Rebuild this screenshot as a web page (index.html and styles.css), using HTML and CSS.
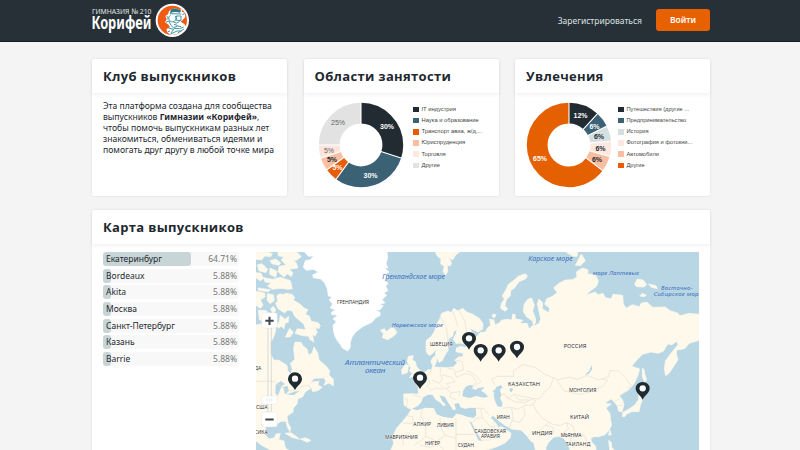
FILE: index.html
```html
<!DOCTYPE html>
<html lang="ru">
<head>
<meta charset="utf-8">
<title>Клуб выпускников</title>
<link rel="stylesheet" href="styles.css">
</head>
<body>
<header class="topbar">
  <div class="container topbar-inner">
    <a class="logo">
      <svg class="wordmark" width="61" height="34" viewBox="0 0 61 34">
        <text x="0" y="10.5" class="logo-small" textLength="59.5" lengthAdjust="spacingAndGlyphs">ГИМНАЗИЯ № 210</text>
        <text x="-.5" y="26.3" class="logo-big" textLength="60" lengthAdjust="spacingAndGlyphs">Корифей</text>
      </svg>
      <svg class="emblem" width="35" height="35" viewBox="0 0 105 105">
        <circle cx="52" cy="52" r="50" fill="#fff"/>
        <circle cx="52" cy="52" r="44" fill="#f15a12"/>
        <path d="M47 20Q60 13 73 21L82 18 81 26 90 29 91 42 83 51 77 56 88 63 94 73 82 87 66 94 49 96 38 89 34 79 45 72 39 64 30 58 35 48 31 39 39 34 42 25Z" fill="#fff"/>
        <path d="M47 20Q60 13 73 21L79 22 75 29Q59 24 45 31Z" fill="#307a83"/>
        <path d="M44 32L79 33M91 31L82 35M47 36a11 11 0 1 0 14 3M64 39h14v13h-14zM61 42h4M56 57Q64 65 74 55M35 39L40 45 36 50M33 57L42 54 47 66 55 74 68 69 78 71M40 75L56 79 48 90M57 76L74 77 86 72M47 93L66 84 80 84M68 90L87 78M57 64L67 67M39 86L45 84" fill="none" stroke="#4695a0" stroke-width="3"/>
      </svg>
    </a>
    <nav class="nav"><a class="register">Зарегистрироваться</a><a class="login">Войти</a></nav>
  </div>
</header>
<main class="container page">
  <div class="cards">
    <section class="card">
      <h2 class="card-title">Клуб выпускников</h2>
      <p class="about">Эта платформа создана для сообщества<br>выпускников <b>Гимназии «Корифей»</b>,<br>чтобы помочь выпускникам разных лет<br>знакомиться, обмениваться идеями и<br>помогать друг другу в любой точке мира</p>
    </section>
    <section class="card">
      <h2 class="card-title">Области занятости</h2>
      <div class="chart">
        <svg width="86" height="86" viewBox="-43 -43 86 86">
          <g class="ring" transform="rotate(-90)">
            <circle r="31.8" pathLength="100" stroke="#222b31" stroke-dasharray="30 70"/>
            <circle r="31.8" pathLength="100" stroke="#3a6274" stroke-dasharray="30 70" stroke-dashoffset="-30"/>
            <circle r="31.8" pathLength="100" stroke="#e85c05" stroke-dasharray="5 95" stroke-dashoffset="-60"/>
            <circle r="31.8" pathLength="100" stroke="#f9bfa2" stroke-dasharray="5 95" stroke-dashoffset="-65"/>
            <circle r="31.8" pathLength="100" stroke="#fde5dc" stroke-dasharray="5 95" stroke-dashoffset="-70"/>
            <circle r="31.8" pathLength="100" stroke="#e2e2e2" stroke-dasharray="25 75" stroke-dashoffset="-75"/>
          </g>
          <g class="gaps"><path d="M0-20V-43"/><path d="M0-20V-43" transform="rotate(108)"/><path d="M0-20V-43" transform="rotate(216)"/><path d="M0-20V-43" transform="rotate(234)"/><path d="M0-20V-43" transform="rotate(252)"/><path d="M0-20V-43" transform="rotate(270)"/></g>
          <g class="slice"><text x="26" y="-15.8" class="on-dark">30%</text><text x="9.5" y="33" class="on-dark">30%</text><text x="-23.5" y="25.2" class="on-dark">5%</text><text x="-29" y="17">5%</text><text x="-32" y="7.6" class="muted">5%</text><text x="-23" y="-19.7" class="muted">25%</text></g>
        </svg>
        <ul class="legend">
          <li><i class="ink"></i>IT индустрия</li><li><i class="teal"></i>Наука и образование</li><li><i class="orange"></i>Транспорт авиа, ж/д,...</li><li><i class="peach"></i>Юриспруденция</li><li><i class="blush"></i>Торговля</li><li><i class="silver"></i>Другие</li>
        </ul>
      </div>
    </section>
    <section class="card">
      <h2 class="card-title">Увлечения</h2>
      <div class="chart hobbies">
        <svg width="86" height="86" viewBox="-43 -43 86 86">
          <g class="ring" transform="rotate(-90)">
            <circle r="31.8" pathLength="17" stroke="#222b31" stroke-dasharray="2 15"/>
            <circle r="31.8" pathLength="17" stroke="#3a6274" stroke-dasharray="1 16" stroke-dashoffset="-2"/>
            <circle r="31.8" pathLength="17" stroke="#d5dfe2" stroke-dasharray="1 16" stroke-dashoffset="-3"/>
            <circle r="31.8" pathLength="17" stroke="#fde8df" stroke-dasharray="1 16" stroke-dashoffset="-4"/>
            <circle r="31.8" pathLength="17" stroke="#f9bda1" stroke-dasharray="1 16" stroke-dashoffset="-5"/>
            <circle r="31.8" pathLength="17" stroke="#e56000" stroke-dasharray="11 6" stroke-dashoffset="-6"/>
          </g>
          <g class="gaps"><path d="M0-20V-43"/><path d="M0-20V-43" transform="rotate(42.35)"/><path d="M0-20V-43" transform="rotate(63.53)"/><path d="M0-20V-43" transform="rotate(84.7)"/><path d="M0-20V-43" transform="rotate(105.9)"/><path d="M0-20V-43" transform="rotate(127.1)"/></g>
          <g class="slice"><text x="11.5" y="-27" class="on-dark">12%</text><text x="25.5" y="-16.5" class="on-dark">6%</text><text x="30" y="-6">6%</text><text x="31.5" y="5.8">6%</text><text x="28" y="17.2">6%</text><text x="-29" y="16.3" class="on-dark">65%</text></g>
        </svg>
        <ul class="legend">
          <li><i class="ink"></i>Путешествия (другие ...</li><li><i class="teal"></i>Предпринимательство</li><li><i class="mist"></i>История</li><li><i class="blush"></i>Фотография и фотокни...</li><li><i class="peach"></i>Автомобили</li><li><i class="orange"></i>Другие</li>
        </ul>
      </div>
    </section>
  </div>
  <section class="card map-card">
    <h2 class="card-title">Карта выпускников</h2>
    <div class="map-body">
      <ul class="cities">
        <li class="leader"><span>Екатеринбург</span><em>64.71%</em></li><li><span>Bordeaux</span><em>5.88%</em></li><li><span>Akita</span><em>5.88%</em></li><li><span>Москва</span><em>5.88%</em></li><li><span>Санкт-Петербург</span><em>5.88%</em></li><li><span>Казань</span><em>5.88%</em></li><li><span>Barrie</span><em>5.88%</em></li>
      </ul>
      <svg class="map" width="443" height="198" viewBox="18 21 1329 594">
        <defs><g id="pin"><path d="M0 27C-5 15-21 8-21-7a21 19 0 0 1 42 0C21 8 5 15 0 27Z" fill="#1f2a31"/><circle cy="-7" r="9.5" fill="#fff"/></g></defs>
        <rect x="18" y="21" width="1329" height="594" fill="#b9d6e5"/>
        <g class="land">
          <!-- Greenland -->
          <path class="ice" d="M164 21L175 34 191 33 181 44 166 47 160 67 169 76 190 73 205 81 188 90 190 98 213 102 224 114 232 132 235 153 246 156 238 165 248 177 241 189 257 195 244 202 245 209 263 210 249 222 259 230 249 241 251 260 255 274 260 284 272 300 278 310 293 318 301 307 301 292 306 276 318 260 340 244 366 232 377 219 391 211 390 202 373 195 389 195 400 182 384 181 405 173 396 164 410 151 401 144 414 137 407 124 414 115 403 105 416 98 405 88 417 81 403 68 414 69 408 57 413 38 411 21Z"/>
          <!-- North America -->
          <path d="M18 240L34 236 60 247 78 248 76 262 70 278 62 292 62 326 71 345 87 346 111 361 113 377 122 387 127 372 121 355 135 343 132 325 131 310 135 291 153 292 159 302 171 312 176 330 186 324 192 306 203 323 207 345 228 363 239 377 237 391 218 399 193 400 178 416 191 410 207 409 204 421 217 427 203 437 188 440 184 429 166 440 158 455 143 462 141 477 130 489 129 501 111 513 114 534 122 548 120 560 112 547 108 529 93 529 84 535 70 530 56 536 47 548 45 569 57 582 73 578 78 567 91 565 86 584 102 588 106 609 115 615H61L35 601 18 588Z"/>
          <path d="M80 152L90 146 100 149 107 145 126 148 134 157 130 165 141 172 151 178 161 188 174 194 166 207 178 214 184 229 204 233 211 242 206 251 195 246 202 262 194 274 186 266 192 291 179 283 176 274 153 271 135 265 142 251 167 254 162 238 144 223 134 214 127 198 112 195 104 204 85 192 77 176 83 167ZM91 211L105 223 116 214 115 232 105 235 102 252 94 243 87 250 79 243 88 229ZM119 250L130 262 120 276 106 276ZM221 400L237 391 250 402 250 423 237 414 222 421 228 407Z"/>
          <path d="M18 21H54L67 26 62 35 44 33 35 45 18 43ZM60 47L77 42 92 53 87 61 65 56ZM84 21H140L154 35 137 47 126 43 139 54 144 69 117 73 129 83 124 95 111 86 102 96 84 80 88 64 108 60 94 45 101 35 85 33ZM22 59L36 56 53 73 48 83 27 77ZM60 69L81 79 77 97 59 88ZM18 83L32 84 41 100 31 108 18 98ZM41 98L68 103 91 97 121 107 127 131 115 133 91 130 68 133 52 123 64 114 45 111ZM18 139L44 144 45 156 31 165 39 180 31 190 18 181ZM52 146L70 149 73 167 60 176 51 165ZM25 196L46 196 69 213 50 232 28 224ZM105 565L123 563 142 577 149 583 128 578ZM151 582L166 578 183 586 172 592ZM24 129L61 134 55 140 25 136ZM62 191L70 184 78 195 69 207Z"/>
          <!-- Islands -->
          <path d="M391 256L403 251 409 260 425 248 434 251 441 264 430 274 413 284 397 278 401 267ZM475 334L490 332 487 345 496 350 500 365 511 377 504 391 478 398 487 385 478 377 483 369 471 350ZM466 358L476 361 472 383 456 388 455 375Z"/>
          <path d="M556 21L562 33 573 43 572 57 583 64 579 78 586 91 593 80 592 61 602 63 604 52 598 40 609 44 617 30 629 21ZM948 21H982V34L969 34ZM994 27L1006 47 991 62 976 61 983 48ZM826 86L832 93 827 101 806 111 794 128 782 137 781 153 769 164 765 182 773 192 765 199 752 190 754 175 763 163 757 152 768 134 775 118 790 107 806 93ZM1162 102L1179 105 1190 119 1182 126 1160 125 1154 117ZM1196 117L1218 122 1222 131 1204 127ZM1177 145L1189 151 1182 155 1169 153ZM729 207L738 209 733 219 726 214ZM1177 369L1183 375 1184 386 1190 405 1184 411 1177 397ZM1168 434L1185 431 1191 442 1178 447 1177 464 1171 481 1167 500 1144 500 1134 506 1117 503 1137 492 1154 480 1165 465ZM1119 504L1131 503 1125 515 1117 514ZM1079 554L1084 569 1076 571ZM1076 586L1084 592 1085 607 1093 615H1079Z"/>
          <!-- Europe, Asia and Africa -->
          <path d="M528 306L529 286 543 275 554 259 558 242 569 222 575 205 594 198 604 203 611 190 624 198 638 190 650 201 667 207 688 220 699 236 698 252 684 261 663 251 657 242 665 260 680 275 691 262 706 261 712 249 722 241 719 222 732 225 734 239 747 235 754 226 773 222 785 226 788 207 796 209 795 221 819 226 809 235 832 235 837 252 850 239 848 228 830 216 820 200 822 179 833 163 845 159 853 181 848 198 856 218 857 232 850 244 867 235 872 221 867 200 862 176 867 162 878 173 877 191 896 203 899 189 884 178 890 161 905 155 922 143 911 128 928 114 946 105 967 104 981 96 979 81 997 69 1014 74 1013 87 1036 89 1045 108 1040 124 1017 141 1009 150 1036 141 1044 149 1059 145 1066 158 1084 161 1089 148 1118 151 1120 176 1128 190 1147 179 1168 185 1174 174 1192 172 1208 187 1246 186 1260 197 1283 204 1290 212 1317 205 1347 208V286L1318 295 1304 311 1280 315 1279 326 1284 344 1272 363 1258 384 1247 392 1243 373 1246 348 1259 330 1276 309 1284 299 1280 289 1266 299 1253 297 1240 319 1225 325 1202 321 1178 328 1164 341 1145 364 1169 372 1163 394 1151 418 1137 434 1119 445 1108 452 1118 466 1122 479 1116 501 1105 498 1103 484 1092 470 1083 462 1064 475 1084 477 1068 489 1080 506 1082 525 1085 541 1077 556 1065 569 1046 575 1033 575 1023 578 1024 590 1037 604 1038 615H960L953 596 941 580 927 574 911 577 896 592 888 607V615H856L851 593 842 588 831 573 814 556 785 552 765 541 747 528 728 511 722 518 740 538 744 547 755 545 763 550 783 564 781 578 765 594 737 607 709 615H422L431 596 427 577 440 549 458 529 475 508 484 493 474 489 462 480 461 447 491 446 505 448 504 425 489 407 504 400 524 383 533 374 545 374 548 361 542 349 551 335 560 333 559 351 552 366 572 367 590 368 610 366 622 354 614 345 626 336 638 335 640 325 619 321 618 310 632 304 645 307 654 300 630 294 619 296 609 283 618 266 620 257 611 258 609 272 596 282 592 299 595 315 584 332 576 348 567 352 556 328 559 312 549 324 538 332 529 322Z"/>
        </g>
        <g class="water">
          <path d="M486 491L504 483 514 471 519 457 534 449 547 449 557 464 572 474 580 484 588 480 576 468 569 451 584 455 595 474 603 485 609 496 618 493 613 477 627 474 631 487 646 491 661 488 677 489 679 510 671 519 651 515 635 509 619 506 607 520 579 515 560 508 552 490 527 488 501 496Z"/>
          <path d="M637 454L639 439 647 425 661 419 671 423 665 430 678 435 682 430 704 426 693 437 705 445 715 455 701 458 679 453 659 459ZM738 427L752 420 758 427 750 434 754 450 750 460 758 475 755 486 742 484 734 465 731 447ZM658 529L664 532 676 554 690 578 697 589 685 585 674 562ZM735 433L728 439 733 447ZM781 429L790 432 784 442 778 437ZM1024 361L1027 371 1016 387 1004 390 1018 377ZM77 420L92 408 105 417 95 424 83 453 76 444ZM99 426L113 422 116 440 105 448ZM108 449L132 440 148 438 132 450Z"/>
        </g>
        <g class="borders">
          <path d="M18 409H74L93 425 111 434 139 438 156 423 177 421 184 433M41 510L48 521M571 215L588 245 594 282 588 305M609 200L624 245M628 197L644 227 652 270 642 295M572 369L570 388 578 402 567 415 546 405M593 369L613 375 619 397 647 385 668 392 680 413 669 421M613 344L636 350 641 375 619 381M575 389L605 397 615 411 590 416 599 427 582 432 572 421M545 375L530 395 540 415 530 424 545 436 556 429 577 432M590 432L604 443 631 440 626 453M604 442L599 456 618 464M489 449L513 456M651 377L673 387 693 410 670 427M735 421L725 402 745 394 791 394 790 377 819 359 857 367 883 387 911 399 900 427 881 444 868 462 847 460 822 455 791 448 777 460 762 447 754 450M911 399L927 404 958 396 982 403 1012 391 1046 405 1076 395 1080 377 1105 378 1126 398 1143 421 1134 439M919 404L943 438 989 448 1020 441 1060 423 1073 405 1056 402M767 456L796 471 825 473 846 463 859 468 846 481 825 481 803 493 782 486 758 490M791 449L808 465 836 465M785 487L789 520 777 550M821 486L825 510 809 532 785 527M848 473L859 498 876 519 910 539 930 541 950 533 955 552 936 566 934 574M950 533L970 544 975 568 1002 571 1012 591M674 490L701 490 718 512M692 492L697 518 677 520M697 518L719 543 740 546M679 520L667 533M722 545L746 566 717 585 685 586M470 512L488 515 489 535 458 534M518 490L512 514 527 535V576L492 601M527 574L560 589 586 571 573 549 570 519M586 571L618 580M618 520V615M618 568H674M430 574H459V601M510 600L541 607 563 597 581 615M895 532L875 552 866 575M886 540L909 548 912 566M965 572L960 592 976 605M465 461L473 463 469 486M1110 460L1094 469M1105 482L1118 480"/>
        </g>
        <g class="country">
          <text x="261" y="178" textLength="96">ГРЕНЛАНДИЯ</text><text x="540" y="303" textLength="68">ШВЕЦИЯ</text><text x="941" y="308" textLength="68" class="major">РОССИЯ</text><text x="774" y="422" textLength="96" class="major">КАЗАХСТАН</text><text x="957" y="440" textLength="82">МОНГОЛИЯ</text><text x="960" y="521" textLength="57" class="major">КИТАЙ</text><text x="740" y="522" textLength="39">ИРАН</text><text x="490" y="542" textLength="53">АЛЖИР</text><text x="561" y="545" textLength="50">ЛИВИЯ</text><text x="405" y="583" textLength="98">МАВРИТАНИЯ</text><text x="525" y="599" textLength="45">НИГЕР</text><text x="623" y="606" textLength="49">СУДАН</text><text x="673" y="563" textLength="95">САУДОВСКАЯ</text><text x="693" y="578" textLength="57">АРАВИЯ</text><text x="846" y="571" textLength="61" class="major">ИНДИЯ</text><text x="932" y="575" textLength="62">МЬЯНМА</text><text x="947" y="603" textLength="74">ТАИЛАНД</text><text x="13" y="375">ДА</text><text x="18" y="493">США</text><text x="13" y="567">СИКА</text>
        </g>
        <g class="sea">
          <text x="397" y="102" textLength="188">Гренландское море</text><text x="425" y="247" textLength="154" class="minor">Норвежское море</text><text x="835" y="48" textLength="133">Карское море</text><text x="1028" y="91" textLength="138" class="minor">море Лаптевых</text><text x="1233" y="134" textLength="94" class="minor">Восточно-</text><text x="1211" y="154" textLength="144" class="minor">Сибирское море</text><text x="285" y="359" textLength="180" class="ocean">Атлантический</text><text x="345" y="385" textLength="61" class="ocean">океан</text>
        </g>
        <use href="#pin" x="135" y="408"/><use href="#pin" x="510" y="405"/><use href="#pin" x="657" y="287"/><use href="#pin" x="692" y="323"/><use href="#pin" x="746" y="323"/><use href="#pin" x="801" y="313"/><use href="#pin" x="1178" y="437"/>
        <g class="zoom-control">
          <path d="M54 247V503M64 247V503" stroke="#c9cccc" stroke-width="2"/>
          <rect x="35" y="203" width="47" height="46" rx="7"/><rect x="35" y="501" width="47" height="45" rx="7"/><rect x="35" y="453" width="47" height="24" rx="5"/>
          <path d="M46 227.500H71M58.500 215V240M46 523.500H71" stroke="#42474b" stroke-width="6"/>
          <path d="M51 460V470M58 460V470M65 460V470" stroke="#ddd" stroke-width="2"/>
        </g>
      </svg>
    </div>
  </section>
</main>
</body>
</html>
```
FILE: styles.css
```css
* { box-sizing: border-box; }
body { margin: 0; height: 450px; overflow: hidden; background: #f4f4f4; color: #1e282f; font-family: "Noto Sans", sans-serif; }
h2, p, ul { margin: 0; padding: 0; }
ul { list-style: none; }
.container { width: 618px; margin-left: 92px; }
.topbar { height: 42px; background: #263036; border-bottom: 1px solid #151e24; }
.topbar-inner { display: flex; justify-content: space-between; }
.logo { display: flex; padding-top: 3px; }
.emblem { margin-left: 2px; }
.wordmark { overflow: visible; }
.logo-small { font-size: 7.6px; fill: #e5e7e8; }
.logo-big { font-size: 18px; font-weight: 700; fill: #fff; }
.nav { display: flex; align-items: center; height: 40px; font-size: 8.5px; color: #dce0e2; }
.register { margin-right: 14px; }
.login { width: 54px; height: 22px; line-height: 21px; text-align: center; border-radius: 3px; background: #e86100; color: #fff; font-weight: 600; }
.page { padding-top: 17px; }
.cards { display: grid; grid-template-columns: repeat(3, 195px); justify-content: space-between; }
.card { height: 137px; background: #fff; border-radius: 2px; box-shadow: 0 0 3px rgba(0, 0, 0, .09); }
.card-title { height: 34px; padding-left: 11px; line-height: 34px; font-family: "Open Sans", "Noto Sans", sans-serif; font-size: 13px; font-weight: 700; letter-spacing: .32px; white-space: nowrap; box-shadow: 0 2px 4px rgba(0, 0, 0, .055); }
.about { padding: 7.5px 0 0 11px; font-size: 8.6px; line-height: 11.2px; white-space: nowrap; }
.chart { display: flex; padding: 8.5px 0 0 14.5px; }
.chart.hobbies { padding-left: 11px; }
.chart svg { flex: none; overflow: visible; }
.ring circle { fill: none; stroke-width: 20.8; }
.gaps path { stroke: #fff; stroke-width: 1.1; }
.slice { font: 700 7px "Liberation Sans", sans-serif; text-anchor: middle; fill: #222b31; }
.slice .on-dark { fill: #fff; }
.slice .muted { fill: #666; font-weight: 400; }
.legend { padding: 2.5px 0 0 9px; font: 5.8px/11.15px "Liberation Sans", sans-serif; color: #444; white-space: nowrap; }
.hobbies .legend { padding-left: 6px; font-size: 5.7px; }
.legend li { display: flex; align-items: center; height: 11.15px; }
.legend i { width: 5.5px; height: 5.5px; margin-right: 3px; }
.ink { background: #202a30; }
.teal { background: #3a6274; }
.orange { background: #e85c05; }
.peach { background: #f9bda1; }
.blush { background: #fde8df; }
.silver { background: #e2e2e2; }
.mist { background: #d5dfe2; }
.map-card { height: 260px; margin-top: 14px; }
.map-body { display: flex; padding: 8px 11px 0; }
.cities { width: 136px; margin-right: 17px; font-size: 8.5px; }
.cities li { position: relative; z-index: 0; display: flex; justify-content: space-between; height: 14px; margin-bottom: 2.7px; padding: 0 2px 0 3px; line-height: 14px; border-radius: 3px; background: #f8f8f8; }
.cities li::before { content: ""; position: absolute; z-index: -1; inset: 0 auto 0 0; width: 8px; border-radius: 3px; background: #c8d5d6; }
.cities .leader::before { width: 88px; }
.cities em { font-style: normal; color: #777; }
.map { flex: none; }
.land path { fill: #fef9eb; stroke: #fef9eb; stroke-width: 2; stroke-linejoin: round; }
.land .ice { fill: #fff; stroke: #fff; }
.water { fill: #b9d6e5; }
.borders { fill: none; stroke: #dfdbcf; stroke-width: 1.8; stroke-linejoin: round; }
.country { font-size: 15px; fill: #30302e; paint-order: stroke; stroke: #fff; stroke-width: 1.5; }
.country .major { font-size: 17px; }
.sea { font-size: 21px; font-style: italic; fill: #3d71ba; }
.sea .minor { font-size: 18px; }
.sea .ocean { font-size: 24px; }
.zoom-control rect { fill: #fff; stroke: #d8dcdd; stroke-width: 1; }
```
